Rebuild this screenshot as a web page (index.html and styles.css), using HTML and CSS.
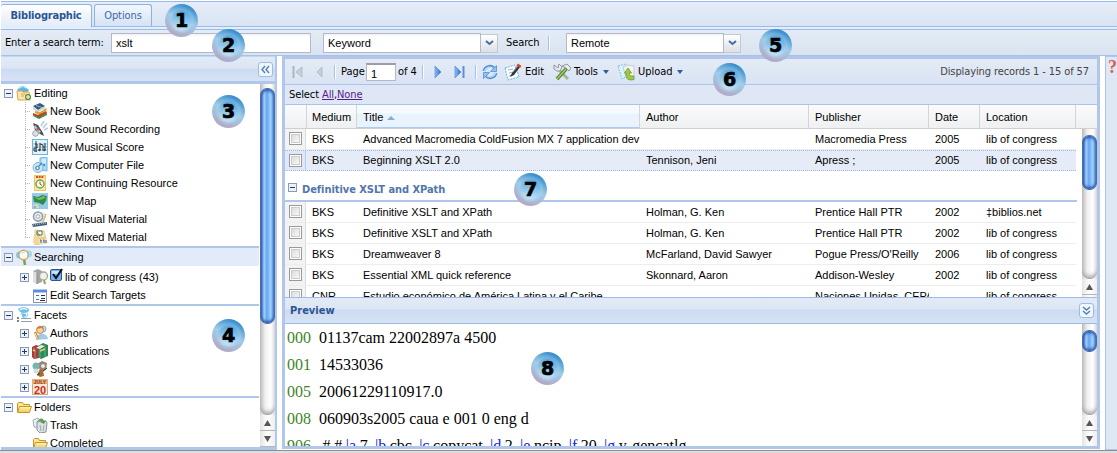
FILE: index.html
```html
<!DOCTYPE html>
<html lang="en">
<head>
<meta charset="utf-8">
<title>Bibliographic</title>
<link rel="stylesheet" href="styles.css">
</head>
<body>
<svg class="defs" width="0" height="0">
  <defs>
    <linearGradient id="g-arrow" x1="0" x2="1"><stop offset="0" stop-color="#8fc0ff"/><stop offset="1" stop-color="#2a62c8"/></linearGradient>
    <linearGradient id="g-folder" x1="0" y1="0" x2="0" y2="1"><stop offset="0" stop-color="#fff6b8"/><stop offset="1" stop-color="#efc94f"/></linearGradient>
  </defs>
  <symbol id="minus" viewBox="0 0 9 9"><rect x=".5" y=".5" width="8" height="8" fill="#eef2f8" stroke="#8a9bb5"/><path d="M2 4.500h5" stroke="#223b66"/></symbol>
  <symbol id="plus" viewBox="0 0 9 9"><rect x=".5" y=".5" width="8" height="8" fill="#eef2f8" stroke="#8a9bb5"/><path d="M2 4.500h5M4.500 2v5" stroke="#223b66"/></symbol>
  <symbol id="editing" viewBox="0 0 16 16"><path d="M1 5l4-4 4 1 4 3-2 3H3z" fill="#5cb6e4"/><path d="M3 3l4-2 3 2" fill="none" stroke="#b8e4f8" stroke-width="1.500"/><path d="M1 6h5l1 1h6l1 8H2z" fill="#fbe6b4" stroke="#dca64e"/><path d="M5 9h5M5 11h3" stroke="#e9a33c"/><path d="M12 9v6M9 12h6" stroke="#5e8f39" stroke-width="3.500"/><path d="M12 10v4M10 12h4" stroke="#d8efc0" stroke-width="1.500"/></symbol>
  <symbol id="book" viewBox="0 0 16 16"><path d="M1 3l7-3 5 3-7 4z" fill="#345c79"/><path d="M1 4l5 3 7-4v2L6 9 1 6z" fill="#c9d3d9"/><path d="M3 8l5 1 6-4 1 2-8 5-4-2z" fill="#e0a52f"/><path d="M1 10l5 2 8-4 1 2-8 5-6-3z" fill="#c33e29"/><path d="M1 12l6 2 8-4v2l-8 4-6-3z" fill="#3b8a4b"/><path d="M4 2.500l6 2" stroke="#8fb4cc"/></symbol>
  <symbol id="sound" viewBox="0 0 16 16"><path d="M1 2l5 2 5 8 1 3-4-2-5-4z" fill="#4b4f55"/><path d="M3 4l6 7-2 1-5-6z" fill="#c4cad0"/><circle cx="6" cy="8" r="1.500" fill="#b35a55"/><circle cx="3.500" cy="12.500" r="2.800" fill="#dce1e6" stroke="#9aa3ad"/><path d="M9 5l3-5M11 7l4-5M12 9l4-2" stroke="#b5cfe2" stroke-width="1.600"/></symbol>
  <symbol id="score" viewBox="0 0 16 16"><rect x=".5" y=".5" width="15" height="15" fill="#e4f3fa" stroke="#65b8dc"/><path d="M1 5h14M1 8h14M1 11h14" stroke="#8ba8b8" stroke-width=".7"/><path d="M4 2v11M3 5h2v4H2v3h3M8 4v7M8 5l3 1v6M13 4v7M11 8h2" fill="none" stroke="#2c3a46" stroke-width="1"/><circle cx="7.500" cy="11" r="1.200" fill="#2c3a46"/><circle cx="12.500" cy="11" r="1.200" fill="#2c3a46"/></symbol>
  <symbol id="computer" viewBox="0 0 16 16"><path d="M8 1l7-1v14l-7-1z" fill="#aadaf5" stroke="#6eb9e3"/><path d="M10 3h4M10 5h4" stroke="#fff"/><circle cx="12" cy="8" r="1" fill="#3978ad"/><circle cx="6" cy="10.500" r="5" fill="#c7e6f8" stroke="#76b6dc"/><circle cx="5.500" cy="11" r="1.700" fill="#fff" stroke="#35678d"/><path d="M7 9l3-3" stroke="#3f86c1" stroke-width="1.500"/></symbol>
  <symbol id="continuing" viewBox="0 0 16 16"><rect x="2.500" y=".5" width="11" height="15" fill="#fbe7a1" stroke="#ecc668"/><path d="M4 2h8" stroke="#d94a27" stroke-width="2" stroke-dasharray="2 .7"/><circle cx="8" cy="9" r="4" fill="#f8fff1" stroke="#6fa450" stroke-width="1.500"/><path d="M8 6.500V9l2 1.500" stroke="#bd3528" fill="none"/></symbol>
  <symbol id="map" viewBox="0 0 16 16"><rect width="16" height="16" fill="#93cbe8"/><path d="M1 3l5 1 4-2 5 1-1 5-3 4-4-2-5-1z" fill="#2e8d4a"/><path d="M2 4l5 1 4-2 3 1-3 2-4 1z" fill="#73bd61"/><path d="M1 12l4-1 2 4H2z" fill="#e7dfb1"/><circle cx="3" cy="14" r="1.500" fill="#9db2c1"/></symbol>
  <symbol id="visual" viewBox="0 0 16 16"><path d="M10 1l4 2-4 9-6 1z" fill="#dce9f0"/><circle cx="6" cy="5.500" r="4.500" fill="#e9eef0" stroke="#8e9ca4" stroke-width="1.500"/><circle cx="6" cy="5.500" r="1.800" fill="#fff" stroke="#9ba9af"/><path d="M14 3l-3 8" stroke="#e2b966" stroke-width="1.500"/><path d="M0 13l15-2v3L1 16z" fill="#3f6079"/><path d="M1 14l13-2" stroke="#b4d0e0" stroke-dasharray="1 1"/></symbol>
  <symbol id="mixed" viewBox="0 0 16 16"><path d="M3 1l9 1 3 12-12 2z" fill="#f8e8b6" stroke="#e3c88b"/><path d="M2 5l5 1v9l-6-1z" fill="#f7d592"/><path d="M5 3l3 4M5 2h5v4H5z" fill="#fff" stroke="#547d5e"/><path d="M7 9h6" stroke="#e2b35b"/><rect x="7" y="10" width="8" height="5" fill="#e4e4db"/><path d="M8 11h1v3M11 11h1v3M14 11v3" stroke="#585c5e" fill="none"/></symbol>
  <symbol id="search" viewBox="0 0 16 16"><circle cx="3.500" cy="6" r="3.500" fill="#7dcbea"/><circle cx="12.500" cy="5" r="3.500" fill="#9bdcf2"/><path d="M8 10l1 6" stroke="#7ca447" stroke-width="2.500"/><circle cx="7.500" cy="6" r="4.700" fill="#f4fbff" stroke="#d4a15e" stroke-width="1.400"/><path d="M5 5c1-2 3-2 4-1" fill="none" stroke="#b6dff3"/></symbol>
  <symbol id="target" viewBox="0 0 16 16"><path d="M1 2l5-2 4 2v11l-5 2-4-3z" fill="#a3a6a8"/><path d="M1 2l4 2v11l-4-3z" fill="#dedfdf"/><path d="M5 4v11" stroke="#858a8e"/><circle cx="11.500" cy="7" r="4" fill="#e7f3f8" stroke="#b9a386" stroke-width="1.300"/><path d="M12 11l1 4" stroke="#89a853" stroke-width="2"/></symbol>
  <symbol id="form" viewBox="0 0 16 16"><rect x="1.500" y="3.500" width="13" height="12" fill="#fff" stroke="#8897ae"/><path d="M1 4h14" stroke="#5b8fdd" stroke-width="3"/><path d="M4 8.500h3M4 12.500h3" stroke="#3572c4"/><path d="M9 8.500h4M9 11.500h4M8 13.500h5" stroke="#333"/></symbol>
  <symbol id="facets" viewBox="0 0 16 16"><path d="M2 2c4-3 11-2 11 1s-6 4-9 2zM5 6l5 1v3l-3 1z" fill="#6bbfe7"/><path d="M4 3c2-2 6-2 7 0" fill="none" stroke="#e5f7ff" stroke-width="1.500"/><path d="M11 6c2 2 0 4-3 4" fill="none" stroke="#b3dff3" stroke-width="1.500"/><path d="M1 11h2M1 14h2" stroke="#4d5860" stroke-width="1.500"/><path d="M5 11.500h10M5 14.500h11" stroke="#8ca2b3"/></symbol>
  <symbol id="author" viewBox="0 0 16 16"><circle cx="11" cy="4" r="3" fill="#c7e1ee" stroke="#7cadc9"/><path d="M4 15c0-8 11-8 12-1z" fill="#9ecbea"/><circle cx="8" cy="5" r="3.500" fill="#f6d0a6" stroke="#cd8742"/><path d="M5 4c1-4 6-4 7 0L9 3z" fill="#d47b2c"/><path d="M3 7l3 7" stroke="#ce8c3d" stroke-width="2.500"/><path d="M3 8l2.500 6" stroke="#ffe6a8"/></symbol>
  <symbol id="pubs" viewBox="0 0 16 16"><path d="M0 4l4-2 3 1v12l-5 1-2-2z" fill="#bb342e"/><path d="M6 3l5-3 5 2v11l-7 3-3-2z" fill="#2c8a50"/><path d="M4 5l5-3 4 1-5 3z" fill="#e7eceb"/><path d="M1 5l2 1v9M8 6v9M13 4v10" stroke="#66a999" fill="none"/><path d="M1 7l2 1M8 8l5-2" stroke="#f4c978" stroke-width="1.500"/></symbol>
  <symbol id="subjects" viewBox="0 0 16 16"><path d="M5 3l5-3 5 2-1 7-5 2z" fill="#928778"/><circle cx="4" cy="5" r="3.500" fill="#75b4c7"/><path d="M2 4l2-1 1 3 2 1-2 2z" fill="#8ab565"/><circle cx="11" cy="5" r="2" fill="#efe7dc"/><path d="M8 8l3 1 1 6-4 1-3-2z" fill="#a56b33"/><circle cx="4" cy="10" r="2.500" fill="#c9dfe8"/><path d="M11 10l4-3M8 12l-3 2" stroke="#493a2e"/></symbol>
  <symbol id="folder" viewBox="0 0 16 16"><path d="M1.500 13V4.500l1-1h4l1 2h6V8" fill="#ffe58b" stroke="#c8952c"/><path d="M1.500 13.500L3.500 7.500H15.500L13.500 13.500z" fill="url(#g-folder)" stroke="#c8952c"/></symbol>
  <symbol id="trash" viewBox="0 0 16 16"><path d="M1 3l5-2 3 3-2 7-5-1z" fill="#e9edf0" stroke="#a5b1b9"/><path d="M5 5l9-1 1 2-1 9-6 1-3-3z" fill="#dce3e7" stroke="#84929b"/><path d="M5 5c2-4 6-5 7-1l2-1-2 4-4-2h2c-1-2-2-1-5 0" fill="#579e4a"/><path d="M8 8l1 6M12 8l-1 6" stroke="#9ba9b0"/></symbol>
  <symbol id="first" viewBox="0 0 12 12"><path d="M1.500 0v12" stroke="#aab5c4" stroke-width="2"/><path d="M10 1v10L4 6z" fill="#c6cfda" stroke="#a3adbb" stroke-width=".7"/></symbol>
  <symbol id="prev" viewBox="0 0 12 12"><path d="M8 1v10L3 6z" fill="#c6cfda" stroke="#a3adbb" stroke-width=".7"/></symbol>
  <symbol id="next" viewBox="0 0 12 12"><path d="M3 0v12L9 6z" fill="url(#g-arrow)" stroke="#4b7fd1" stroke-width=".6"/></symbol>
  <symbol id="last" viewBox="0 0 12 12"><path d="M1 0v12L7 6z" fill="url(#g-arrow)" stroke="#4b7fd1" stroke-width=".6"/><path d="M9.500 0v12" stroke="#5a8fe0" stroke-width="2"/></symbol>
  <symbol id="refresh" viewBox="0 0 16 16"><path d="M2 7c1-5 7-6 10-3M14 9c-1 5-7 6-10 3" fill="none" stroke="#4d92d9" stroke-width="2.800"/><path d="M2.500 7c1-4 6-5 9-2.500M13.500 9c-1 4-6 5-9 2.500" fill="none" stroke="#cfe8fc" stroke-width="1.100"/><path d="M14.500 1.500v6h-6zM1.500 14.500v-6h6z" fill="#8fc3f3" stroke="#4d92d9" stroke-width=".8"/></symbol>
  <symbol id="edit" viewBox="0 0 18 18"><path d="M1 5l10-3 4 12-11 3z" fill="#fff" stroke="#5db8e5" stroke-dasharray="2 1"/><path d="M4 7l5-1M5 10l4-1M5 13l3-1" stroke="#9caeba"/><path d="M14 2L8 10l-2 4 4-2 6-8z" fill="#29343d"/><path d="M9 9l5-6" stroke="#8a959d"/><path d="M14 0.500l3.500 2.500-1.500 2-3.500-2.500z" fill="#df3f33"/></symbol>
  <symbol id="tools" viewBox="0 0 18 18"><path d="M4 5l11 11" stroke="#a7b5a0" stroke-width="3"/><path d="M14 5L4 16" stroke="#537c31" stroke-width="3.500"/><path d="M13 6L4 16" stroke="#9bd65a" stroke-width="1.500"/><path d="M1 2l4 3 1-4 3 3-2 4H4L1 6zM9 3l5-2 4 4-2 3-3-3z" fill="#e6eaeb" stroke="#8f999f"/></symbol>
  <symbol id="upload" viewBox="0 0 18 18"><path d="M1 3l8-2 3 11-7 4z" fill="#def2fc" stroke="#78c5ec" stroke-dasharray="2 1"/><path d="M6 4l5-2 6 1v10l-8 1z" fill="#f3f4ee" stroke="#c3ced3"/><path d="M7.500 10L11 5l3.500 5h-2.200c0 2.500 1.200 3.500 4.700 3v3.500c-6 1.500-8.500-1-8-6.500z" fill="#9ccb45" stroke="#6d9630" stroke-width=".8"/></symbol>
  <symbol id="left2" viewBox="0 0 9 9"><path d="M4 1L1 4.500 4 8M8 1L5 4.500 8 8" fill="none" stroke="#527fb8" stroke-width="1.400"/></symbol>
  <symbol id="down2" viewBox="0 0 9 9"><path d="M1 1l3.500 3L8 1M1 5l3.500 3L8 5" fill="none" stroke="#527fb8" stroke-width="1.400"/></symbol>
  <symbol id="chev" viewBox="0 0 9 6"><path d="M1 1l3.500 3L8 1" fill="none" stroke="#446da5" stroke-width="2"/></symbol>
  <symbol id="triUp" viewBox="0 0 7 6"><path d="M0 6h7L3.500 0z" fill="#555"/></symbol>
  <symbol id="triDown" viewBox="0 0 7 6"><path d="M0 0h7L3.500 6z" fill="#555"/></symbol>
</svg>

<div class="app">
  <div class="tabs"><div class="tab active">Bibliographic</div><div class="tab">Options</div></div>
  <div class="tabline"></div>
  <div class="searchbar">
    <label class="term">Enter a search term:</label>
    <div class="field f-term">xslt</div>
    <div class="field f-combo">Keyword</div><div class="trigger"><svg width="9" height="6"><use href="#chev"/></svg></div>
    <span class="go">Search</span><i class="sep"></i>
    <div class="field f-combo">Remote</div><div class="trigger"><svg width="9" height="6"><use href="#chev"/></svg></div>
  </div>

  <div class="body">
    <aside class="side">
      <div class="side-head"><span class="toolbtn"><svg width="9" height="9"><use href="#left2"/></svg></span></div>
      <div class="side-body">
        <div class="tree">
          <section class="group editing">
            <div class="node root"><svg class="ex"><use href="#minus"/></svg><svg class="ic"><use href="#editing"/></svg>Editing</div>
            <div class="kids">
              <div class="node"><svg class="ic"><use href="#book"/></svg>New Book</div>
              <div class="node"><svg class="ic"><use href="#sound"/></svg>New Sound Recording</div>
              <div class="node"><svg class="ic"><use href="#score"/></svg>New Musical Score</div>
              <div class="node"><svg class="ic"><use href="#computer"/></svg>New Computer File</div>
              <div class="node"><svg class="ic"><use href="#continuing"/></svg>New Continuing Resource</div>
              <div class="node"><svg class="ic"><use href="#map"/></svg>New Map</div>
              <div class="node"><svg class="ic"><use href="#visual"/></svg>New Visual Material</div>
              <div class="node"><svg class="ic"><use href="#mixed"/></svg>New Mixed Material</div>
            </div>
          </section>
          <section class="group">
            <div class="node root selected"><svg class="ex"><use href="#minus"/></svg><svg class="ic"><use href="#search"/></svg>Searching</div>
            <div class="node child tall"><svg class="ex"><use href="#plus"/></svg><svg class="ic"><use href="#target"/></svg><svg class="check" viewBox="0 0 13 13"><rect x=".5" y="1.500" width="11" height="11" rx="1.500" fill="#76b0ed" stroke="#34557f"/><path d="M2 3h8v3H2z" fill="#c9e3fc"/><path d="M3 6l3 4 6-9" fill="none" stroke="#07111d" stroke-width="2"/></svg>lib of congress (43)</div>
            <div class="node child"><span class="ex"></span><svg class="ic"><use href="#form"/></svg>Edit Search Targets</div>
          </section>
          <section class="group">
            <div class="node root"><svg class="ex"><use href="#minus"/></svg><svg class="ic"><use href="#facets"/></svg>Facets</div>
            <div class="node child"><svg class="ex"><use href="#plus"/></svg><svg class="ic"><use href="#author"/></svg>Authors</div>
            <div class="node child"><svg class="ex"><use href="#plus"/></svg><svg class="ic"><use href="#pubs"/></svg>Publications</div>
            <div class="node child"><svg class="ex"><use href="#plus"/></svg><svg class="ic"><use href="#subjects"/></svg>Subjects</div>
            <div class="node child"><svg class="ex"><use href="#plus"/></svg><svg class="ic" viewBox="0 0 16 16"><rect x=".5" y=".5" width="15" height="15" fill="#f7e9d6" stroke="#d1a77c"/><rect width="16" height="5" fill="#e8b072"/><text x="8" y="4.800" text-anchor="middle" class="cal-m">JULY</text><text x="8" y="14.500" text-anchor="middle" class="cal-d">20</text></svg>Dates</div>
          </section>
          <section class="group">
            <div class="node root"><svg class="ex"><use href="#minus"/></svg><svg class="ic"><use href="#folder"/></svg>Folders</div>
            <div class="node child"><span class="ex"></span><svg class="ic"><use href="#trash"/></svg>Trash</div>
            <div class="node child"><span class="ex"></span><svg class="ic"><use href="#folder"/></svg>Completed</div>
          </section>
        </div>
        <div class="scroll s-side"><div class="track"><div class="thumb"></div></div><div class="sb"><svg width="7" height="6"><use href="#triUp"/></svg></div><div class="sb"><svg width="7" height="6"><use href="#triDown"/></svg></div></div>
      </div>
    </aside>

    <main class="main">
      <div class="pager">
        <svg class="pg"><use href="#first"/></svg><svg class="pg g2"><use href="#prev"/></svg><i class="sep s1"></i>
        <span class="page">Page</span><span class="pagebox">1</span><span class="of">of 4</span><i class="sep s2"></i>
        <svg class="pg"><use href="#next"/></svg><svg class="pg g4"><use href="#last"/></svg><i class="sep s3"></i>
        <svg class="ic g5"><use href="#refresh"/></svg>
        <svg class="big b1"><use href="#edit"/></svg><span class="t-edit">Edit</span>
        <svg class="big b2"><use href="#tools"/></svg><span class="t-tools">Tools</span><i class="caret"></i>
        <svg class="big b3"><use href="#upload"/></svg><span class="t-upload">Upload</span><i class="caret"></i>
        <span class="display">Displaying records 1 - 15 of 57</span>
      </div>
      <div class="selectbar"><span>Select <a>All</a>,<a>None</a></span></div>
      <div class="cols head"><div></div><div>Medium</div><div class="sorted">Title<i class="asc"></i></div><div>Author</div><div>Publisher</div><div>Date</div><div>Location</div><div></div></div>
      <div class="grid">
        <div class="rows">
          <div class="cols row"><div><i class="cb"></i></div><div>BKS</div><div>Advanced Macromedia ColdFusion MX 7 application dev</div><div></div><div>Macromedia Press</div><div>2005</div><div>lib of congress</div></div>
          <div class="cols row hot"><div><i class="cb"></i></div><div>BKS</div><div>Beginning XSLT 2.0</div><div>Tennison, Jeni</div><div>Apress ;</div><div>2005</div><div>lib of congress</div></div>
          <div class="grouphd"><svg class="ex"><use href="#minus"/></svg><span>Definitive XSLT and XPath</span></div>
          <div class="cols row"><div><i class="cb"></i></div><div>BKS</div><div>Definitive XSLT and XPath</div><div>Holman, G. Ken</div><div>Prentice Hall PTR</div><div>2002</div><div>‡biblios.net</div></div>
          <div class="cols row"><div><i class="cb"></i></div><div>BKS</div><div>Definitive XSLT and XPath</div><div>Holman, G. Ken</div><div>Prentice Hall PTR</div><div>2002</div><div>lib of congress</div></div>
          <div class="cols row"><div><i class="cb"></i></div><div>BKS</div><div>Dreamweaver 8</div><div>McFarland, David Sawyer</div><div>Pogue Press/O'Reilly</div><div>2006</div><div>lib of congress</div></div>
          <div class="cols row"><div><i class="cb"></i></div><div>BKS</div><div>Essential XML quick reference</div><div>Skonnard, Aaron</div><div>Addison-Wesley</div><div>2002</div><div>lib of congress</div></div>
          <div class="cols row"><div><i class="cb"></i></div><div>CNR</div><div>Estudio económico de América Latina y el Caribe</div><div></div><div>Naciones Unidas, CEPAL</div><div></div><div>lib of congress</div></div>
        </div>
        <div class="scroll s-grid"><div class="track"><div class="thumb"></div></div><div class="sb"><svg width="7" height="6"><use href="#triUp"/></svg></div><div class="sb"></div></div>
      </div>
      <div class="prevhd"><span>Preview</span><span class="toolbtn"><svg width="9" height="9"><use href="#down2"/></svg></span></div>
      <div class="preview">
        <div class="marc">
          <div><b>000</b><span>01137cam 22002897a 4500</span></div>
          <div><b>001</b><span>14533036</span></div>
          <div><b>005</b><span>20061229110917.0</span></div>
          <div><b>008</b><span>060903s2005 caua e 001 0 eng d</span></div>
          <div class="subfields"><b>906</b><span>&nbsp;# # <em>|a</em> 7 &nbsp;<em>|b</em> cbc &nbsp;<em>|c</em> copycat &nbsp;<em>|d</em> 2 &nbsp;<em>|e</em> ncip &nbsp;<em>|f</em> 20 &nbsp;<em>|g</em> y-gencatlg</span></div>
        </div>
        <div class="scroll s-prev"><div class="track"><div class="thumb"></div></div><div class="sb"><svg width="7" height="6"><use href="#triUp"/></svg></div><div class="sb"><svg width="7" height="6"><use href="#triDown"/></svg></div></div>
      </div>
    </main>
    <aside class="help"><span>?</span></aside>
  </div>
  <div class="foot"></div>

  <span class="badge n1">1</span><span class="badge n2">2</span><span class="badge n3">3</span><span class="badge n4">4</span>
  <span class="badge n5">5</span><span class="badge n6">6</span><span class="badge n7">7</span><span class="badge n8">8</span>
</div>
</body>
</html>
```

FILE: styles.css
```css
* { box-sizing: border-box; }
html, body { margin: 0; overflow: hidden; }
body { width: 1117px; height: 453px; background: #fff; font: 11px/14px "Liberation Sans", Arial, sans-serif; color: #000; }
.defs { position: absolute; }
svg { display: block; flex: none; }
i, em { font-style: normal; }
.app { position: relative; width: 1117px; height: 453px; padding: 1px 0 0 1px; display: flex; flex-direction: column; overflow: hidden; }

.tabs { height: 26px; flex: none; display: flex; align-items: flex-end; gap: 2px; border-top: 1px solid #99bbe8; border-bottom: 1px solid #99bbe8; background: linear-gradient(#e6edf8, #d8e3f3); font-family: "DejaVu Sans Condensed", sans-serif; letter-spacing: -.1px; }
.tab { height: 22px; width: 58px; border: 1px solid #8db2e3; border-bottom: 0; border-radius: 3px 3px 0 0; text-align: center; line-height: 22px; color: #416aa3; background: linear-gradient(#f2f7fe, #d5e3f5); }
.tab.active { width: 91px; height: 23px; margin-bottom: -1px; font-weight: bold; color: #2a5592; background: linear-gradient(#fff, #e1ebf8); border-left: 0; letter-spacing: -.2px; }
.tabline { height: 3px; flex: none; background: #e6eefa; border-bottom: 1px solid #99bbe8; }

.searchbar { height: 26px; flex: none; display: flex; align-items: center; border-bottom: 1px solid #a9c1e5; background: linear-gradient(#e4ebf5, #d9e4f1); }
.term { width: 110px; padding-left: 4px; font-family: "DejaVu Sans Condensed", sans-serif; white-space: nowrap; letter-spacing: -.15px; }
.field { height: 20px; border: 1px solid #b5b8c8; background: linear-gradient(#f0f1f3, #fff 3px); padding: 2px 4px; }
.f-term { width: 200px; margin-right: 12px; }
.f-combo { width: 158px; }
.trigger { width: 17px; height: 19px; margin-top: 1px; border: 1px solid #c4c8d0; border-left: 0; background: linear-gradient(#fff, #dcdfe4); display: flex; align-items: center; justify-content: center; }
.go { margin-left: 8px; width: 42px; font-family: "DejaVu Sans Condensed", sans-serif; letter-spacing: -.1px; }
.sep { width: 2px; height: 14px; background: #9fc2ee; border-right: 1px solid #fff; margin-right: 16px; flex: none; }

.body { height: 394px; flex: none; display: flex; gap: 5px; }
.side { width: 276px; border-right: 2px solid #b0c6eb; border-bottom: 3px solid #b0c6eb; display: flex; flex-direction: column; }
.side-head { height: 28px; flex: none; border-bottom: 3px solid #b0c6eb; border-top: 1px solid #c3d5ef; background: linear-gradient(#e1eaf6 0, #dbe5f4 11px, #ccdbf1 12px, #d7e2f4); display: flex; justify-content: flex-end; align-items: center; padding-right: 2px; }
.toolbtn { width: 15px; height: 15px; border: 1px solid #9ebbe3; border-radius: 3px; background: #f0f6fe; display: flex; align-items: center; justify-content: center; }
.side-body { flex: 1; min-height: 0; display: flex; }
.tree { width: 258px; overflow: hidden; }
.side-body .scroll { margin-left: 1px; }
.group + .group { border-top: 2px solid #b0c6eb; }
.node { height: 18px; display: flex; align-items: center; white-space: nowrap; }
.ic { width: 16px; height: 16px; margin-right: 2px; }
.ex { width: 9px; height: 9px; flex: none; margin-right: 3px; }
.root { padding-left: 3px; }
.child { padding-left: 19px; }
.tall { height: 20px; padding-top: 2px; }
.check { width: 13px; height: 13px; margin: -6px 2px 0 0; }
.selected { background: #e2ebfa; }
.kids { margin-left: 24px; background: repeating-linear-gradient(#bbb 0 1px, transparent 1px 2px) 0 0 / 1px 135px no-repeat; }
.kids .node { padding-left: 7px; background: repeating-linear-gradient(90deg, #bbb 0 1px, transparent 1px 2px) 0 9px / 6px 1px no-repeat; }
.cal-m { font: bold 5px "Liberation Sans", sans-serif; fill: #913527; }
.cal-d { font: bold 11px "Liberation Sans", sans-serif; fill: #d22e22; }

.scroll { width: 15px; flex: none; display: flex; flex-direction: column; background: linear-gradient(90deg, #d2d2d2, #fff 40%, #f6f6f6 75%, #ddd); overflow: hidden; }
.track { flex: none; border-radius: 0 0 8px 8px; background: linear-gradient(90deg, #bdbdbd, #f0f0f0 35%, #fff 70%, #dedede); border-bottom: 1px solid #999; box-shadow: inset 0 -4px 4px -2px #aaa; }
.thumb { width: 15px; border-radius: 7px; border: 1px solid #4a6fa6; background: linear-gradient(90deg, #2a60c4, #a3cef9 25%, #67a5f0 45%, #9fd2ff 75%, #4a7dcb); box-shadow: inset 0 3px 3px -1px #2a56ae, inset 0 -3px 3px -1px #2a56ae; }
.sb { height: 16px; flex: none; display: flex; align-items: center; justify-content: center; border-bottom: 1px solid #b6b6b6; background: linear-gradient(90deg, #e4e4e4, #fff 50%, #eee); }
.s-side .track { height: 331px; padding-top: 4px; }
.s-side .thumb { height: 236px; }
.s-grid .track { height: 150px; padding-top: 6px; }
.s-grid .thumb { height: 55px; }
.s-prev .track { height: 91px; padding-top: 6px; }
.s-prev .thumb { height: 22px; }

.main { width: 818px; flex: none; border: 3px solid #b0c6eb; display: flex; flex-direction: column; margin-bottom: 1px; }
.pager { height: 26px; flex: none; display: flex; align-items: center; padding-left: 7px; background: linear-gradient(#e4ebf6, #d9e3f3); border-bottom: 1px solid #a9c4ec; font-family: "DejaVu Sans Condensed", sans-serif; white-space: nowrap; letter-spacing: -.05px; }
.pg { width: 12px; height: 12px; }
.g2 { margin-left: 10px; }
.s1 { margin: 0 5px 0 8px; }
.page { width: 25px; }
.pagebox { width: 30px; height: 18px; border: 1px solid #b5b8c8; border-top: 2px solid #999ca5; background: #fff; padding: 2px 4px; font-family: "Liberation Sans", sans-serif; }
.of { width: 21px; margin-left: 2px; }
.s2 { margin: 0 8px 0 3px; }
.g4 { margin-left: 10px; }
.s3 { margin: 0 5px 0 9px; }
.g5 { margin: 0; }
.big { width: 18px; height: 18px; }
.b1 { margin-left: 6px; }
.t-edit { margin-left: 3px; width: 21px; }
.b2 { margin-left: 7px; }
.t-tools { margin-left: 3px; width: 26px; }
.caret { border: 3px solid transparent; border-top: 4px solid #315c95; border-bottom: 0; margin-left: 3px; }
.b3 { margin-left: 8px; }
.t-upload { margin-left: 3px; width: 36px; }
.display { margin-left: auto; margin-right: 8px; color: #444; letter-spacing: -.1px; }
.selectbar { height: 20px; flex: none; padding: 3px 0 0 4px; background: #dfe7f4; border-bottom: 1px solid #a9c4ec; font-family: "DejaVu Sans Condensed", sans-serif; letter-spacing: -.1px; }
.selectbar a { color: #551a8b; text-decoration: underline; }
.cols { display: grid; grid-template-columns: 22px 50px 283px 169px 120px 51px 96px; }
.cols > div { padding-left: 6px; overflow: hidden; white-space: nowrap; }
.cols > div:nth-child(2) { padding-left: 5px; }
.head { height: 24px; flex: none; grid-template-columns: 22px 50px 283px 169px 120px 51px 96px 1fr; background: linear-gradient(#fbfbfb, #eef0f2); border-bottom: 1px solid #d0d0d0; line-height: 24px; }
.head > div { border-right: 1px solid #d5d5d5; }
.head > div:last-child { border: 0; }
.head .sorted { background: linear-gradient(#f5faff 8px, #e9f3fd 9px); border-bottom: 1px solid #aaccf6; }
.asc { display: inline-block; border: 4px solid transparent; border-bottom: 4px solid #89a9d8; border-top: 0; margin: 0 0 1px 4px; }
.grid { height: 168px; flex: none; display: flex; justify-content: space-between; overflow: hidden; }
.rows { width: 792px; }
.row { height: 21px; width: 791px; line-height: 20px; border-bottom: 1px solid #ededed; }
.row > div:first-child { padding: 3px 0 0 4px; background: #f3f3f3; border-right: 1px solid #ddd; width: 21px; }
.cb { display: block; width: 13px; height: 13px; border: 1px solid #9a9a9a; background: linear-gradient(135deg, #d5d5d5, #fff); box-shadow: inset 0 0 0 1px #fff, inset 0 0 0 2px #ccc; }
.hot { background: #e5ecf7; border-top: 1px dotted #a3bae9; border-bottom: 1px dotted #a3bae9; line-height: 19px; }
.hot > div:first-child { background: #dfe8f6; border-right-color: #b8cdee; }
.grouphd { height: 31px; border-bottom: 2px solid #b0c6eb; display: flex; padding: 12px 0 0 3px; font: bold 11px/13px "DejaVu Sans Condensed", sans-serif; color: #4f76ad; letter-spacing: -.05px; }
.grouphd .ex { margin-right: 5px; }
.prevhd { height: 27px; flex: none; display: flex; justify-content: space-between; align-items: center; padding: 0 3px 0 5px; border-top: 1px solid #99bbe8; border-bottom: 1px solid #99bbe8; background: linear-gradient(#e2eaf6 0, #dce6f4 11px, #ccdbf1 12px, #d7e3f5); font: bold 11px "DejaVu Sans Condensed", sans-serif; color: #2a5592; }
.preview { flex: 1; min-height: 0; display: flex; justify-content: space-between; overflow: hidden; }
.marc { font: 16px/27px "Liberation Serif", "Times New Roman", serif; white-space: nowrap; padding-left: 2px; }
.marc > div { display: flex; height: 27px; }
.marc b { font-weight: normal; color: #3f8428; width: 32px; }
.marc em { color: #1020e0; }
.subfields { word-spacing: -.4px; }

.help { flex: 1; background: #dfe6f4; border-left: 1px solid #a9c4ec; border-top: 1px solid #b0c6eb; border-bottom: 1px solid #b0c6eb; overflow: hidden; padding: 2px 0 0 2px; font: bold 18px/17px "Liberation Serif", serif; color: #d6604f; }
.foot { height: 3px; flex: none; margin-left: -1px; border-top: 1px solid #8f8f8f; background: #dedede; }

.badge { position: absolute; isolation: isolate; width: 33px; height: 33px; border-radius: 50%; background: linear-gradient(205deg, #3a8fce 15%, #9fcbe8 48%, #b3a8c4 88%); font: bold 19px/33px "DejaVu Sans", sans-serif; text-align: center; -webkit-text-stroke: .7px #000; }
.badge::before { content: ""; position: absolute; z-index: -1; inset: 6px; border-radius: 50%; background: linear-gradient(190deg, #459dd6, #8cc5ea 50%, #d0edfc); box-shadow: 0 0 2px 1px rgba(190, 222, 243, .65); filter: blur(.8px); }
.n1 { left: 165px; top: 4px; }
.n2 { left: 212px; top: 29px; }
.n3 { left: 212px; top: 95px; }
.n4 { left: 212px; top: 319px; }
.n5 { left: 759px; top: 29px; }
.n6 { left: 713px; top: 63px; }
.n7 { left: 514px; top: 173px; }
.n8 { left: 531px; top: 352px; }
```
